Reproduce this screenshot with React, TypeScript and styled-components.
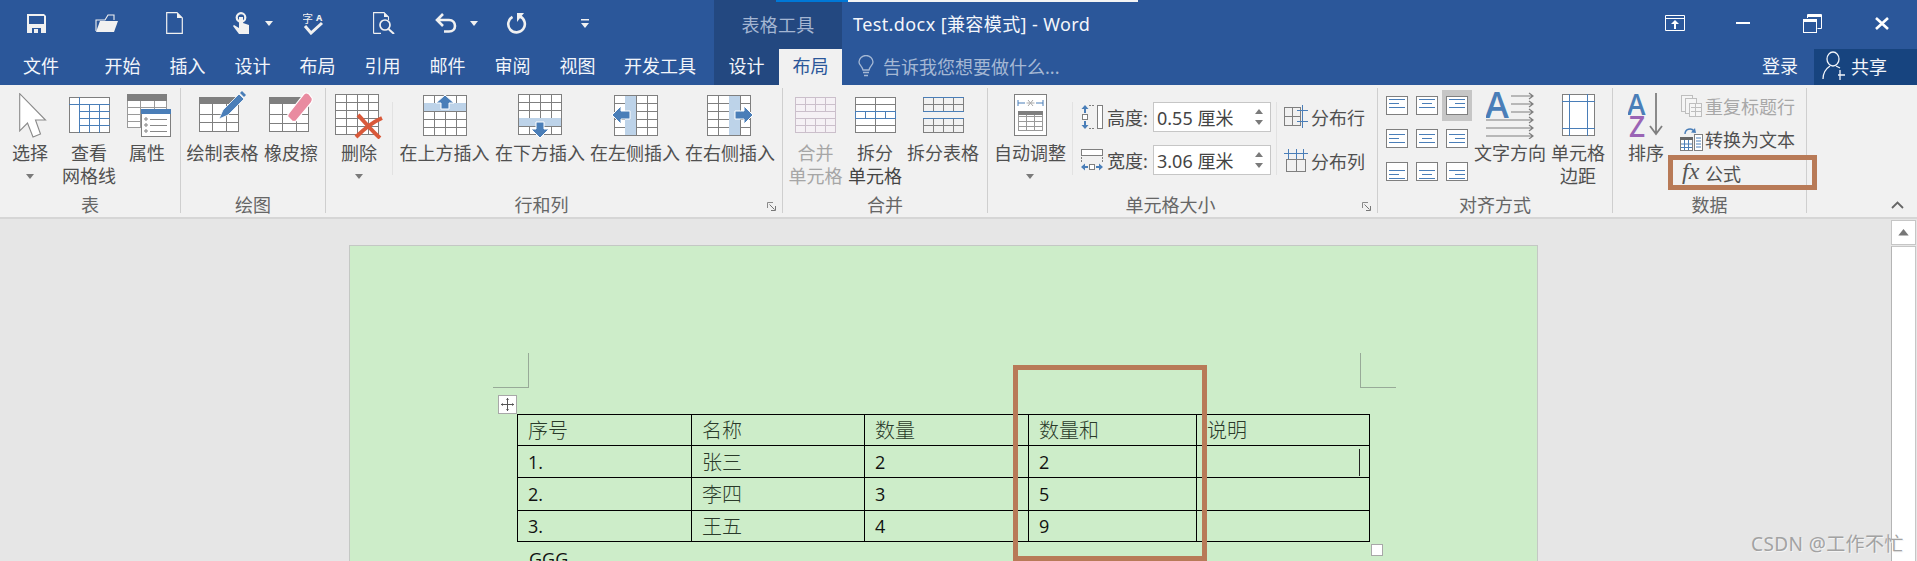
import React from "react";
import styled, { createGlobalStyle } from "styled-components";

const CJK = `"Noto Sans", "Noto Sans CJK SC", sans-serif`;
const BLUE = "#2B579A";
const ICON_BLUE = "#4A7EB8";
const GREY = "#7F7F7F";
const ORANGE = "#B87A57";

const Global = createGlobalStyle`
  html, body { margin: 0; padding: 0; width: 1917px; height: 561px; overflow: hidden; background: #E6E6E6; }
  #root { width: 1917px; height: 561px; }
  * { box-sizing: border-box; }
  svg { display: block; flex: none; }
`;

const Shell = styled.div`
  width: 1917px; height: 561px; display: flex; flex-direction: column; font-family: ${CJK}; position: relative; overflow: hidden;
`;
const TopStrip = styled.div`
  position: absolute; left: 776px; top: 0; width: 362px; height: 2px;
  background: linear-gradient(to right, #0078D7 0, #0078D7 72px, #F4F4F4 72px);
`;
const TitleBar = styled.div`
  height: 49px; background: ${BLUE}; display: flex; align-items: stretch; color: #fff; flex: none;
`;
const Qat = styled.div`
  width: 714px; display: flex; align-items: center; padding-bottom: 3px;
`;
const QatItem = styled.span<{ $ml: number }>` margin-left: ${p => p.$ml}px; display: flex; `;
const ContextTitle = styled.div`
  width: 128px; background: #234880; color: #A4B6D2; font-size: 18px; letter-spacing: 0.3px; display: flex; align-items: center; justify-content: center; padding-bottom: 1px;
`;
const DocTitle = styled.div`
  margin-left: 11px; font-size: 18px; line-height: 49px; color: #F4F6FA; white-space: nowrap; letter-spacing: 0.4px;
`;
const WinControls = styled.div`
  margin-left: auto; display: flex; align-items: center; padding-right: 28px; padding-bottom: 3px;
`;
const WinItem = styled.span<{ $ml: number }>` margin-left: ${p => p.$ml}px; display: flex; `;

const TabBar = styled.div`
  height: 36px; background: ${BLUE}; display: flex; align-items: stretch; flex: none; color: #F2F5FA;
`;
const Tab = styled.div<{ $w: number; $mr?: number; $dark?: boolean; $active?: boolean }>`
  width: ${p => p.$w}px; margin-right: ${p => p.$mr ?? 0}px;
  background: ${p => (p.$active ? "#F1F1F1" : p.$dark ? "#234880" : "transparent")};
  color: ${p => (p.$active ? BLUE : "#F2F5FA")};
  font-size: 18px; display: flex; align-items: center; justify-content: center; white-space: nowrap; padding-bottom: 4px;
`;
const TellMe = styled.div`
  margin-left: 16px; display: flex; align-items: center; gap: 9px; color: #A5B8D4; font-size: 18px; padding-bottom: 2px;
`;
const Login = styled.div`
  margin-left: auto; width: 72px; text-align: center; font-size: 18px; align-self: center; padding-bottom: 4px; padding-left: 4px;
`;
const Share = styled.div`
  width: 103px; background: #17447F; display: flex; align-items: center; gap: 6px; padding-left: 8px; font-size: 18px; padding-bottom: 2px;
`;

const Ribbon = styled.div`
  height: 134px; background: #F1F1F1; border-bottom: 2px solid #D6D6D6; display: flex; position: relative; flex: none; color: #505050;
`;
const Group = styled.section<{ $w: number }>`
  width: ${p => p.$w}px; height: 125px; margin-top: 3px; border-right: 1px solid #CFCFCF; display: flex; flex-direction: column; justify-content: space-between; position: relative; flex: none;
`;
const GroupBody = styled.div` display: flex; align-items: flex-start; `;
const GroupLabel = styled.div<{ $pr?: number }>`
  height: 24px; line-height: 24px; text-align: center; font-size: 18px; color: #666; padding-right: ${p => p.$pr ?? 0}px; margin-bottom: -4px;
`;
const BigBtn = styled.div<{ $w: number; $muted?: boolean }>`
  width: ${p => p.$w}px; flex: none; display: flex; flex-direction: column; align-items: center; color: ${p => (p.$muted ? "#A6A6A6" : "#505050")};
`;
const IconSlot = styled.div`
  height: 50px; margin-top: 2px; margin-bottom: 2px; display: flex; align-items: center; justify-content: center;
`;
const Lines = styled.div`
  font-size: 18px; line-height: 22.5px; text-align: center; white-space: nowrap;
`;
const Line = styled.div<{ $muted?: boolean; $dark?: boolean }>`
  color: ${p => (p.$muted ? "#A6A6A6" : p.$dark ? "#444" : "inherit")};
`;
const CaretRow = styled.div` height: 23px; display: flex; align-items: center; justify-content: center; `;
const SmallSep = styled.div`
  width: 1px; height: 73px; background: #E2E2E2; margin-top: 14px; flex: none;
`;
const SizeCol = styled.div`
  width: 203px; padding-top: 14px; padding-left: 8px; display: flex; flex-direction: column; gap: 13px; flex: none;
`;
const SizeRow = styled.div` height: 30px; display: flex; align-items: center; `;
const SizeLabel = styled.span`
  width: 50px; padding-left: 4px; font-size: 18px; white-space: nowrap; color: #4A4A4A; flex: none;
`;
const Spin = styled.div`
  width: 118px; height: 30px; background: #fff; border: 1px solid #C6C6C6; display: flex; align-items: center; padding-left: 3px; position: relative; font-size: 18px; color: #444; white-space: pre;
`;
const SpinArrows = styled.div`
  position: absolute; right: 7px; top: 6px; bottom: 6px; display: flex; flex-direction: column; justify-content: space-between;
`;
const DistCol = styled.div`
  padding-top: 17px; padding-left: 7px; display: flex; flex-direction: column; gap: 21px;
`;
const DistRow = styled.div` height: 23px; display: flex; align-items: center; gap: 3px; font-size: 18px; white-space: nowrap; `;
const AlignGrid = styled.div`
  display: grid; grid-template-columns: repeat(3, 30px); grid-auto-rows: 31px; row-gap: 2px; margin-left: 4px; margin-top: 2px; flex: none;
`;
const AlignCell = styled.div<{ $on?: boolean }>`
  background: ${p => (p.$on ? "#C6C6C6" : "transparent")}; display: flex; align-items: center; justify-content: center;
`;
const SmallCol = styled.div` padding-top: 1px; display: flex; flex-direction: column; `;
const SmallRow = styled.div<{ $muted?: boolean }>`
  height: 33.5px; display: flex; align-items: center; font-size: 18px; white-space: nowrap; color: ${p => (p.$muted ? "#A8A8A8" : "#505050")};
`;
const SmallIcon = styled.span` width: 26px; display: flex; justify-content: center; padding-right: 2px; `;
const Launcher = styled.span`
  position: absolute; right: 6px; bottom: 2px;
`;
const Chevron = styled.span` position: absolute; left: 1891px; top: 116px; `;
const Highlight = styled.div<{ $l: number; $t: number; $w: number; $h: number }>`
  position: absolute; left: ${p => p.$l}px; top: ${p => p.$t}px; width: ${p => p.$w}px; height: ${p => p.$h}px; border: 5px solid ${ORANGE}; pointer-events: none;
`;

const Workspace = styled.div`
  flex: 1; min-height: 0; display: flex; background: #E6E6E6; position: relative; overflow: hidden;
`;
const DocArea = styled.div` width: 1891px; flex: none; padding-left: 349px; padding-top: 26px; `;
const Page = styled.div`
  width: 1189px; height: 500px; background: #CDEDC9; border: 1px solid #C4C8C4; padding-top: 107px; position: relative;
`;
const Marks = styled.div` display: flex; justify-content: space-between; padding: 0 141px 0 143px; `;
const Mark = styled.div<{ $side: "left" | "right" }>`
  width: 36px; height: 35px; border-bottom: 1px solid #98AA98;
  ${p => (p.$side === "left" ? "border-right" : "border-left")}: 1px solid #98AA98;
`;
const DocTable = styled.table`
  margin: 26px 0 0 167px; border-collapse: collapse; table-layout: fixed; width: 852px; color: #111;
`;
const Td = styled.td<{ $cjk?: boolean }>`
  border: 1px solid #000; padding: 0 0 0 10px; font-size: ${p => (p.$cjk ? 20 : 18)}px; font-family: ${p => (p.$cjk ? `"Noto Sans CJK SC", sans-serif` : `"Open Sans", sans-serif`)}; font-weight: ${p => (p.$cjk ? 300 : 400)}; color: ${p => (p.$cjk ? "#2A3A2A" : "#111")}; line-height: 20px; white-space: nowrap;
`;
const Tr = styled.tr<{ $h: number }>` height: ${p => p.$h}px; `;
const AfterText = styled.p`
  margin: 5px 0 0 179px; font-family: "Open Sans", sans-serif; font-size: 18px; line-height: 24px; color: #111;
`;
const MoveHandle = styled.div`
  position: absolute; left: 148px; top: 149px; width: 19px; height: 19px; background: #fff; border: 1px solid #A8A8A8; display: flex; align-items: center; justify-content: center;
`;
const ResizeHandle = styled.div`
  position: absolute; left: 1021px; top: 298px; width: 12px; height: 12px; background: #fff; border: 1px solid #A8A8A8;
`;
const Caret = styled.div`
  position: absolute; left: 1009px; top: 203px; width: 1px; height: 27px; background: #222;
`;
const Scroll = styled.div`
  width: 25px; flex: none; display: flex; flex-direction: column; gap: 1px; padding-top: 1px;
`;
const ScrollBtn = styled.div`
  height: 25px; background: #fff; border: 1px solid #C6C6C6; display: flex; align-items: center; justify-content: center;
`;
const ScrollTrack = styled.div`
  flex: 1; background: #fff; border-left: 1px solid #B4B4B4; border-right: 1px solid #C6C6C6; border-top: 1px solid #C6C6C6;
`;
const Watermark = styled.div`
  position: absolute; left: 1751px; top: 313px; font-size: 19px; line-height: 24px; letter-spacing: 0.4px; color: #A2A2A2; white-space: nowrap; text-shadow: 1px 1px 0 #F4F4F4;
`;

/* ---------- icons ---------- */
const W = "#F1F1F1";

const Down = ({ c = "#7A7A7A", w = 8 }: { c?: string; w?: number }) => (
  <svg width={w} height={w / 2 + 1} viewBox="0 0 8 5"><path d="M0 0H8L4 5Z" fill={c} /></svg>
);
const SaveI = () => (
  <svg width="19" height="19" viewBox="0 0 19 19"><path fillRule="evenodd" fill={W} d="M0 0H17L19 2V19H0ZM2 2V10H17V2ZM5 14V19H7V15H11V19H14V14Z" /></svg>
);
const OpenI = () => (
  <svg width="23" height="19" viewBox="0 0 23 19"><path d="M1 17V6H10L13 1H19V6" fill="none" stroke={W} strokeWidth="1.1" /><path d="M1 18L5 7H23L19 18Z" fill={W} /></svg>
);
const NewI = () => (
  <svg width="17" height="22" viewBox="0 0 17 22"><path d="M.7.7H11L16.3 6V21.3H.7Z" fill="none" stroke={W} strokeWidth="1.2" /><path d="M11 .7V6H16.3Z" fill={W} /></svg>
);
const TouchI = () => (
  <svg width="17" height="22" viewBox="0 0 17 22">
    <circle cx="8" cy="5.5" r="4.3" fill="none" stroke={W} strokeWidth="2.2" />
    <path fill={W} d="M6 5h4v6l6 2v9H6L0 14l1-1 5 3Z" />
  </svg>
);
const SpellI = () => (
  <svg width="22" height="23" viewBox="0 0 22 23">
    <text x="-1" y="11" fontSize="11" fill={W} fontFamily={`"Noto Sans CJK SC", sans-serif`}>字</text>
    <text x="13" y="9" fontSize="9" fontWeight="700" fill={W} fontFamily={`"Noto Sans", sans-serif`}>A</text>
    <path d="M2 14L8 21L19 11" fill="none" stroke={W} strokeWidth="3" />
  </svg>
);
const PreviewI = () => (
  <svg width="22" height="22" viewBox="0 0 22 22">
    <path d="M.6 21.4V.6H11L15.5 5V8M8 21.4H.6" fill="none" stroke={W} strokeWidth="1.1" />
    <path d="M11 .6V5H15.5Z" fill={W} />
    <circle cx="12" cy="13" r="5" fill="none" stroke={W} strokeWidth="1.7" />
    <path d="M15.5 17L21 22" stroke={W} strokeWidth="2" />
  </svg>
);
const UndoI = () => (
  <svg width="22" height="20" viewBox="0 0 22 20"><path d="M2 7H14C18 7 20 10 20 13S18 18.5 14 18.5H9M8 1L2 7L8 13" fill="none" stroke={W} strokeWidth="2.6" /></svg>
);
const RedoI = () => (
  <svg width="21" height="21" viewBox="0 0 21 21"><path d="M6.5 3.8A8.3 8.3 0 1 0 14 3.5" fill="none" stroke={W} strokeWidth="2.6" /><path d="M11 0H18L11 9Z" fill={W} /></svg>
);
const CustomI = () => (
  <svg width="8" height="9" viewBox="0 0 8 9"><path d="M0 0H8V1.5H0ZM0 4H8L4 9Z" fill={W} /></svg>
);
const DisplayI = () => (
  <svg width="20" height="16" viewBox="0 0 20 16"><path d="M.5.5H19.5V15.5H.5ZM.5 3.5H19.5" fill="none" stroke="#fff" /><path d="M10 5L14 9H11V14H9V9H6Z" fill="#fff" /></svg>
);
const MinI = () => <svg width="14" height="2" viewBox="0 0 14 2"><rect width="14" height="2" fill="#fff" /></svg>;
const RestoreI = () => (
  <svg width="19" height="19" viewBox="0 0 19 19"><path d="M4.5 4V.5H18.5V14.5H14.5" fill="none" stroke="#fff" /><path d="M4.5 2H18.5" stroke="#fff" strokeWidth="2" /><rect x=".5" y="5.5" width="13" height="13" fill="none" stroke="#fff" /><path d="M0 7H14" stroke="#fff" strokeWidth="2" /></svg>
);
const CloseI = () => (
  <svg width="14" height="13" viewBox="0 0 14 13"><path d="M1 1L13 12M13 1L1 12" stroke="#fff" strokeWidth="2.6" /></svg>
);
const BulbI = () => (
  <svg width="16" height="22" viewBox="0 0 16 22"><path d="M5 15C4 11 1 10 1 7A7 6.5 0 0 1 15 7C15 10 12 11 11 15Z" fill="none" stroke="#A5B8D4" strokeWidth="1.3" /><path d="M5 17.5H11M6 20.5H10" stroke="#A5B8D4" strokeWidth="1.4" /></svg>
);
const PersonI = () => (
  <svg width="23" height="30" viewBox="0 0 23 30"><ellipse cx="11" cy="8" rx="6" ry="7" fill="none" stroke="#F2F5FA" strokeWidth="1.3" /><path d="M1 28C1 21 5 17 8 15M14 15L18 17" fill="none" stroke="#F2F5FA" strokeWidth="1.3" /><path d="M16 24H23M18 19V29" stroke="#F2F5FA" strokeWidth="1.3" /></svg>
);

type GridProps = { w: number; h: number; cols: number[]; rows: number[]; x?: number; y?: number; c?: string; fill?: string };
const Grid = ({ w, h, cols, rows, x = 0, y = 0, c = GREY, fill = "#fff" }: GridProps) => (
  <g shapeRendering="crispEdges">
    <rect x={x + 0.5} y={y + 0.5} width={w - 1} height={h - 1} fill={fill} stroke={c} />
    {cols.map(v => <path key={"c" + v} d={`M${x + v + 0.5} ${y}V${y + h}`} stroke={c} />)}
    {rows.map(v => <path key={"r" + v} d={`M${x} ${y + v + 0.5}H${x + w}`} stroke={c} />)}
  </g>
);

const CursorI = () => (
  <svg width="33" height="45" viewBox="-5 0 33 45"><path d="M.7.7V38L8.5 30L14 44L21.5 41L16.5 27H26.5Z" fill="#fff" stroke="#8A8A8A" strokeWidth="1.1" /></svg>
);
const ViewGridI = () => (
  <svg width="41" height="36" viewBox="0 0 41 36">
    <rect x=".5" y=".5" width="40" height="35" fill="#fff" stroke={GREY} shapeRendering="crispEdges" />
    <g stroke={ICON_BLUE} shapeRendering="crispEdges">
      <path d="M0 7.5H41M10.5 0V36M10 14.5H41M10 21.5H41M10 28.5H41M20.5 7V36M30.5 7V36" />
    </g>
  </svg>
);
const PropsI = () => (
  <svg width="48" height="43" viewBox="-4 0 48 43">
    <Grid w={40} h={34} cols={[13, 27]} rows={[6, 13, 20, 27]} c="#9A9A9A" />
    <rect width="40" height="7" fill={GREY} />
    <rect x="14.5" y="15.5" width="29" height="27" fill="#fff" stroke={GREY} shapeRendering="crispEdges" />
    <rect x="14" y="15" width="30" height="5" fill={ICON_BLUE} />
    <g fill="none" stroke="#777"><circle cx="19" cy="25" r="1.2" /><circle cx="19" cy="31" r="1.2" /><circle cx="19" cy="37" r="1.2" /></g>
    <path d="M23 25.5H40M23 31.5H40M23 37.5H40" stroke="#888" />
  </svg>
);
const DrawTableI = () => (
  <svg width="48" height="48" viewBox="0 0 48 48">
    <Grid w={40} h={35} y={6} cols={[13, 27]} rows={[17, 25]} />
    <rect y="6" width="40" height="7" fill={GREY} />
    <path d="M20 28L24 19L40 3L45 8L29 24Z" fill={ICON_BLUE} stroke="#fff" strokeWidth=".8" />
    <path d="M41 2L43 0L47 4L45 6Z" fill={ICON_BLUE} />
  </svg>
);
const EraserI = () => (
  <svg width="44" height="48" viewBox="0 0 44 48">
    <Grid w={40} h={35} y={6} cols={[13, 27]} rows={[17, 26]} />
    <rect y="6" width="40" height="7" fill={GREY} />
    <path d="M20 22L35 3Q37 1 40 3L43 7Q44 9 42 12L27 30Q25 31 23 30L19 26Q18 24 20 22Z" fill="#E98BA0" stroke="#fff" strokeWidth="1.2" />
  </svg>
);
const DeleteI = () => (
  <svg width="48" height="47" viewBox="0 -2 48 47">
    <Grid w={44} h={41} cols={[11, 22, 33]} rows={[8, 16, 24, 32]} />
    <path d="M23 21C28 26 36 36 45 44M47 24C38 28 28 36 21 43" fill="none" stroke="#D9593A" strokeWidth="4" />
  </svg>
);
const colsI = [11, 22, 33];
const rowsI = [8, 16, 24, 32];
const InsertAboveI = () => (
  <svg width="44" height="41" viewBox="0 0 44 41">
    <Grid w={44} h={41} cols={colsI} rows={rowsI} />
    <rect x="1" y="8" width="42" height="8" fill="#BDD3E9" />
    <path d="M22 0L31 8H26V14H18V8H13Z" fill={ICON_BLUE} stroke="#fff" strokeWidth="1" />
  </svg>
);
const InsertBelowI = () => (
  <svg width="44" height="50" viewBox="0 -4 44 50">
    <Grid w={44} h={41} cols={colsI} rows={rowsI} />
    <rect x="1" y="24" width="42" height="8" fill="#BDD3E9" />
    <path d="M22 44L31 35H26V28H18V35H13Z" fill={ICON_BLUE} stroke="#fff" strokeWidth="1" />
  </svg>
);
const InsertLeftI = () => (
  <svg width="46" height="41" viewBox="0 0 46 41">
    <Grid x={2} w={44} h={41} cols={colsI} rows={rowsI} />
    <rect x="13" y="1" width="11" height="39" fill="#BDD3E9" />
    <path d="M0 20L9 11V16H18V24H9V29Z" fill={ICON_BLUE} stroke="#fff" strokeWidth="1" />
  </svg>
);
const InsertRightI = () => (
  <svg width="46" height="41" viewBox="0 0 46 41">
    <Grid w={44} h={41} cols={colsI} rows={rowsI} />
    <rect x="22" y="1" width="11" height="39" fill="#BDD3E9" />
    <path d="M46 20L37 11V16H28V24H37V29Z" fill={ICON_BLUE} stroke="#fff" strokeWidth="1" />
  </svg>
);
const MergeI = () => (
  <svg width="41" height="36" viewBox="0 0 41 36">
    <Grid w={41} h={36} cols={[10, 20, 30]} rows={[7, 14, 21, 28]} c="#CBBFCB" fill="#F5F1F5" />
    <rect x="1" y="15" width="39" height="6" fill="#F5F1F5" />
  </svg>
);
const SplitCellI = () => (
  <svg width="41" height="36" viewBox="0 0 41 36">
    <Grid w={41} h={36} cols={[20]} rows={[7, 28]} />
    <rect x="1" y="14" width="39" height="8" fill="#fff" />
    <g stroke={ICON_BLUE} shapeRendering="crispEdges"><rect x=".5" y="14.5" width="40" height="7" fill="#fff" /><path d="M10.5 14V22M20.5 14V22M30.5 14V22" /></g>
  </svg>
);
const SplitTableI = () => (
  <svg width="41" height="36" viewBox="0 0 41 36">
    <g shapeRendering="crispEdges" stroke={GREY} fill="none">
      <path d="M.5 0V14.5H40.5V0M.5 21V35.5H40.5V21M10.5 0V14M20.5 0V14M30.5 0V14M10.5 21V35M20.5 21V35M30.5 21V35M0 7.5H41M0 28.5H41" />
      <path d="M0 .5H41M0 21.5H41" stroke={ICON_BLUE} />
      <path d="M0 14.5H41" stroke={ICON_BLUE} />
    </g>
  </svg>
);
const AutoFitI = () => (
  <svg width="33" height="42" viewBox="0 0 33 42">
    <rect x=".5" y=".5" width="32" height="41" fill="#fff" stroke={GREY} shapeRendering="crispEdges" />
    <path d="M4 6V12M4 9H11M29 6V12M22 9H29" stroke={ICON_BLUE} />
    <path d="M14 6L19 12M19 6L14 12M12.5 9H20.5" stroke="#A8A8A8" />
    <Grid x={4} y={17} w={25} h={20} cols={[8, 16]} rows={[5, 10, 15]} c="#9A9A9A" />
    <rect x="4" y="17" width="25" height="4" fill={GREY} />
  </svg>
);
const HeightI = () => (
  <svg width="22" height="24" viewBox="0 0 22 24">
    <g shapeRendering="crispEdges"><rect x="16.5" y=".5" width="5" height="23" fill="#fff" stroke={GREY} /><rect x="1.5" y="9.5" width="5" height="5" fill="#fff" stroke={GREY} /><path d="M8 .5H14M8 23.5H14" stroke={GREY} strokeDasharray="2 1" /></g>
    <path d="M4 0L7.5 4H5V8H3V4H.5ZM4 24L7.5 20H5V16H3V20H.5Z" fill={ICON_BLUE} />
  </svg>
);
const WidthI = () => (
  <svg width="22" height="23" viewBox="0 0 22 23">
    <g shapeRendering="crispEdges"><rect x=".5" y=".5" width="21" height="6" fill="#fff" stroke={GREY} /><rect x="8.5" y="15.5" width="5" height="5" fill="#fff" stroke={GREY} /><path d="M.5 8V14M21.5 8V14" stroke={GREY} strokeDasharray="2 1" /></g>
    <path d="M0 18L4 14.5V17H7V19H4V21.5ZM22 18L18 14.5V17H15V19H18V21.5Z" fill={ICON_BLUE} />
  </svg>
);
const DistRowI = () => (
  <svg width="24" height="23" viewBox="0 0 24 23" shapeRendering="crispEdges">
    <rect x=".5" y="2.5" width="16" height="18" fill="none" stroke={GREY} />
    <path d="M8.5 2V21M0 11.5H16" stroke={GREY} />
    <path d="M18.5 0V23M13 5.5H24M13 16.5H24" stroke={ICON_BLUE} />
  </svg>
);
const DistColI = () => (
  <svg width="24" height="23" viewBox="0 0 24 23">
    <g shapeRendering="crispEdges"><rect x="2.5" y="10.5" width="19" height="12" fill="none" stroke={GREY} /><path d="M12.5 10V23" stroke={GREY} /><path d="M0 4.5H24M4.5 0V10M12.5 0V10M19.5 0V10" stroke={ICON_BLUE} /></g>
  </svg>
);
type VAlign = "t" | "m" | "b";
type HAlign = "l" | "c" | "r";
const AlignI = ({ v, h }: { v: VAlign; h: HAlign }) => {
  const y0 = v === "t" ? 3 : v === "m" ? 5 : 8;
  const start = (len: number) => (h === "l" ? 3 : h === "r" ? 19 - len : 11 - len / 2);
  const d = [[16, 0], [10, 4], [16, 8]].map(([len, dy]) => `M${start(len)} ${y0 + dy + 0.5}h${len}`).join("");
  return (
    <svg width="22" height="19" viewBox="0 0 22 19" shapeRendering="crispEdges">
      <rect x=".5" y=".5" width="21" height="18" fill="#fff" stroke={GREY} />
      <path d={d} stroke={ICON_BLUE} fill="none" />
    </svg>
  );
};
const TextDirI = () => (
  <svg width="48" height="47" viewBox="0 0 48 47">
    <text x="-1" y="26" fontSize="36" fontWeight="600" fill={ICON_BLUE} fontFamily={`"Open Sans", sans-serif`}>A</text>
    <g fill="none" stroke={GREY} strokeWidth="1.2">
      <path d="M25 4H47M43 1L47 4L43 7M25 12H47M43 9L47 12L43 15M25 20H47M43 17L47 20L43 23M0 28H47M43 25L47 28L43 31M0 36H47M43 33L47 36L43 39M0 44H47M43 41L47 44L43 47" />
    </g>
  </svg>
);
const MarginI = () => (
  <svg width="33" height="42" viewBox="0 0 33 42" shapeRendering="crispEdges">
    <rect x=".5" y=".5" width="32" height="41" fill="#fff" stroke={GREY} />
    <path d="M7.5 0V42M25.5 0V42M0 7.5H33M0 34.5H33" stroke={ICON_BLUE} />
  </svg>
);
const SortI = () => (
  <svg width="36" height="44" viewBox="0 0 36 44">
    <text x="-1" y="22" fontSize="28" fontWeight="600" fill={ICON_BLUE} fontFamily={`"Open Sans", sans-serif`}>A</text>
    <text x="1" y="44" fontSize="28" fontWeight="600" fill="#9A64B5" fontFamily={`"Open Sans", sans-serif`}>Z</text>
    <path d="M28 0V41M22 33L28 41L34 33" fill="none" stroke={GREY} strokeWidth="1.8" />
  </svg>
);
const RepeatI = () => (
  <svg width="21" height="22" viewBox="0 0 21 22">
    <g fill="#F5F5F5" stroke="#BEBEBE"><rect x=".5" y=".5" width="11" height="16" /><rect x="4.5" y="3.5" width="11" height="15" /><rect x="8.5" y="8.5" width="12" height="13" /></g>
    <path d="M10 12.5H20M10 16.5H20M14.5 9V21" stroke="#BEBEBE" />
  </svg>
);
const ConvertI = () => (
  <svg width="23" height="24" viewBox="0 0 23 24">
    <path d="M5 7A5 5 0 0 1 14 4" fill="none" stroke={ICON_BLUE} strokeWidth="1.4" />
    <path d="M16 6L11 5.5L15 1Z" fill={ICON_BLUE} />
    <rect x=".5" y="10.5" width="12" height="13" fill="#fff" stroke={GREY} />
    <rect y="10" width="13" height="3" fill="#666" />
    <path d="M1 17H12M1 20.5H12M4.5 13V23M8.5 13V23" stroke={ICON_BLUE} />
    <rect x="14.5" y="7.5" width="8" height="16" fill="#fff" stroke={GREY} />
    <path d="M16 11H21M16 14H21M16 17H21M16 20H21" stroke={ICON_BLUE} />
  </svg>
);
const FxI = () => (
  <svg width="18" height="26" viewBox="0 0 18 26">
    <text x="0" y="19" fontSize="24" fontStyle="italic" fill="#555" fontFamily={`"Liberation Serif", serif`}>fx</text>
  </svg>
);
const LauncherI = () => (
  <svg width="9" height="9" viewBox="0 0 9 9"><path d="M.5 6V.5H6" fill="none" stroke="#8A8A8A" /><path d="M2.5 2.5L7.5 7.5M8.5 4V8.5H4" fill="none" stroke="#777" /></svg>
);
const ChevronI = () => (
  <svg width="13" height="8" viewBox="0 0 13 8"><path d="M1 7L6.5 1.5L12 7" fill="none" stroke="#666" strokeWidth="1.8" /></svg>
);
const MoveI = () => (
  <svg width="13" height="13" viewBox="0 0 13 13"><path d="M6.5 0V13M0 6.5H13" stroke="#555" /><path d="M5 2L6.5 0L8 2ZM5 11L6.5 13L8 11ZM2 5L0 6.5L2 8ZM11 5L13 6.5L11 8Z" fill="#555" /></svg>
);
function Up({ c = "#7A7A7A", w = 8 }: { c?: string; w?: number }) {
  return <svg width={w} height={w / 2 + 1} viewBox="0 0 8 5"><path d="M0 5H8L4 0Z" fill={c} /></svg>;
}

const Big = ({ w, icon, lines, caret, muted, dark }: { w: number; icon: React.ReactNode; lines: string[]; caret?: boolean; muted?: boolean; dark?: boolean[] }) => (
  <BigBtn $w={w} $muted={muted}>
    <IconSlot>{icon}</IconSlot>
    <Lines>
      {lines.map((l, i) => <Line key={l} $dark={dark?.[i]}>{l}</Line>)}
      {caret && <CaretRow><Down /></CaretRow>}
    </Lines>
  </BigBtn>
);

const rowsData = [
  { h: 31, c: ["序号", "名称", "数量", "数量和", "说明"], cjk: [true, true, true, true, true] },
  { h: 32, c: ["1.", "张三", "2", "2", ""], cjk: [false, true, false, false, false] },
  { h: 33, c: ["2.", "李四", "3", "5", ""], cjk: [false, true, false, false, false] },
  { h: 31, c: ["3.", "王五", "4", "9", ""], cjk: [false, true, false, false, false] },
];
const widths = [174, 173, 164, 168, 173];
const tabs: [string, number, number?][] = [
  ["文件", 82, 8], ["开始", 65], ["插入", 65], ["设计", 65], ["布局", 65], ["引用", 65], ["邮件", 65], ["审阅", 65], ["视图", 65], ["开发工具", 100, 4],
];
const aligns: [VAlign, HAlign][] = [["t", "l"], ["t", "c"], ["t", "r"], ["m", "l"], ["m", "c"], ["m", "r"], ["b", "l"], ["b", "c"], ["b", "r"]];

export default function App() {
  return (
    <Shell>
      <Global />
      <TitleBar>
        <Qat>
          <QatItem $ml={27}><SaveI /></QatItem>
          <QatItem $ml={49}><OpenI /></QatItem>
          <QatItem $ml={48}><NewI /></QatItem>
          <QatItem $ml={50}><TouchI /></QatItem>
          <QatItem $ml={15}><Down c={W} /></QatItem>
          <QatItem $ml={30}><SpellI /></QatItem>
          <QatItem $ml={48}><PreviewI /></QatItem>
          <QatItem $ml={40}><UndoI /></QatItem>
          <QatItem $ml={13}><Down c={W} /></QatItem>
          <QatItem $ml={28}><RedoI /></QatItem>
          <QatItem $ml={54}><CustomI /></QatItem>
        </Qat>
        <ContextTitle>表格工具</ContextTitle>
        <DocTitle>Test.docx [兼容模式] - Word</DocTitle>
        <WinControls>
          <WinItem $ml={0}><DisplayI /></WinItem>
          <WinItem $ml={51}><MinI /></WinItem>
          <WinItem $ml={53}><RestoreI /></WinItem>
          <WinItem $ml={53}><CloseI /></WinItem>
        </WinControls>
      </TitleBar>
      <TopStrip />
      <TabBar>
        {tabs.map(([t, w, mr]) => <Tab key={t + w} $w={w} $mr={mr}>{t}</Tab>)}
        <Tab $w={65} $dark>设计</Tab>
        <Tab $w={63} $active>布局</Tab>
        <TellMe><BulbI />告诉我您想要做什么...</TellMe>
        <Login>登录</Login>
        <Share><PersonI />共享</Share>
      </TabBar>
      <Ribbon>
        <Group $w={181}>
          <GroupBody>
            <Big w={60} icon={<CursorI />} lines={["选择"]} caret />
            <Big w={58} icon={<ViewGridI />} lines={["查看", "网格线"]} />
            <Big w={58} icon={<PropsI />} lines={["属性"]} />
          </GroupBody>
          <GroupLabel>表</GroupLabel>
        </Group>
        <Group $w={145}>
          <GroupBody>
            <Big w={83} icon={<DrawTableI />} lines={["绘制表格"]} />
            <Big w={54} icon={<EraserI />} lines={["橡皮擦"]} />
          </GroupBody>
          <GroupLabel>绘图</GroupLabel>
        </Group>
        <Group $w={457}>
          <GroupBody>
            <Big w={66} icon={<DeleteI />} lines={["删除"]} caret />
            <SmallSep />
            <Big w={103} icon={<InsertAboveI />} lines={["在上方插入"]} />
            <Big w={88} icon={<InsertBelowI />} lines={["在下方插入"]} />
            <Big w={102} icon={<InsertLeftI />} lines={["在左侧插入"]} />
            <Big w={88} icon={<InsertRightI />} lines={["在右侧插入"]} />
          </GroupBody>
          <GroupLabel $pr={25}>行和列</GroupLabel>
          <Launcher><LauncherI /></Launcher>
        </Group>
        <Group $w={205}>
          <GroupBody>
            <Big w={65} icon={<MergeI />} lines={["合并", "单元格"]} muted />
            <Big w={54} icon={<SplitCellI />} lines={["拆分", "单元格"]} dark={[false, true]} />
            <Big w={82} icon={<SplitTableI />} lines={["拆分表格"]} />
          </GroupBody>
          <GroupLabel>合并</GroupLabel>
        </Group>
        <Group $w={390}>
          <GroupBody>
            <Big w={84} icon={<AutoFitI />} lines={["自动调整"]} caret />
            <SmallSep />
            <SizeCol>
              <SizeRow>
                <HeightI />
                <SizeLabel>高度:</SizeLabel>
                <Spin>0.55 厘米<SpinArrows><Up /><Down /></SpinArrows></Spin>
              </SizeRow>
              <SizeRow>
                <WidthI />
                <SizeLabel>宽度:</SizeLabel>
                <Spin>3.06 厘米<SpinArrows><Up /><Down /></SpinArrows></Spin>
              </SizeRow>
            </SizeCol>
            <SmallSep />
            <DistCol>
              <DistRow><DistRowI />分布行</DistRow>
              <DistRow><DistColI />分布列</DistRow>
            </DistCol>
          </GroupBody>
          <GroupLabel $pr={24}>单元格大小</GroupLabel>
          <Launcher><LauncherI /></Launcher>
        </Group>
        <Group $w={235}>
          <GroupBody>
            <AlignGrid>
              {aligns.map(([v, h], i) => (
                <AlignCell key={v + h} $on={i === 2}><AlignI v={v} h={h} /></AlignCell>
              ))}
            </AlignGrid>
            <Big w={76} icon={<TextDirI />} lines={["文字方向"]} />
            <Big w={60} icon={<MarginI />} lines={["单元格", "边距"]} />
          </GroupBody>
          <GroupLabel>对齐方式</GroupLabel>
        </Group>
        <Group $w={194}>
          <GroupBody>
            <Big w={66} icon={<SortI />} lines={["排序"]} />
            <SmallCol>
              <SmallRow $muted><SmallIcon><RepeatI /></SmallIcon>重复标题行</SmallRow>
              <SmallRow><SmallIcon><ConvertI /></SmallIcon>转换为文本</SmallRow>
              <SmallRow><SmallIcon><FxI /></SmallIcon>公式</SmallRow>
            </SmallCol>
          </GroupBody>
          <GroupLabel>数据</GroupLabel>
        </Group>
        <Chevron><ChevronI /></Chevron>
        <Highlight $l={1668} $t={70} $w={149} $h={35} />
      </Ribbon>
      <Workspace>
        <DocArea>
          <Page>
            <Marks><Mark $side="left" /><Mark $side="right" /></Marks>
            <DocTable>
              <colgroup>{widths.map((w, i) => <col key={i} style={{ width: w }} />)}</colgroup>
              <tbody>
                {rowsData.map(r => (
                  <Tr key={r.c[0]} $h={r.h}>
                    {r.c.map((t, i) => <Td key={i} $cjk={r.cjk[i]}>{t}</Td>)}
                  </Tr>
                ))}
              </tbody>
            </DocTable>
            <AfterText>GGG</AfterText>
            <MoveHandle><MoveI /></MoveHandle>
            <ResizeHandle />
            <Caret />
          </Page>
        </DocArea>
        <Scroll>
          <ScrollBtn><Up c="#777" w={11} /></ScrollBtn>
          <ScrollTrack />
        </Scroll>
        <Highlight $l={1013} $t={146} $w={194} $h={196} />
        <Watermark>CSDN @工作不忙</Watermark>
      </Workspace>
    </Shell>
  );
}
